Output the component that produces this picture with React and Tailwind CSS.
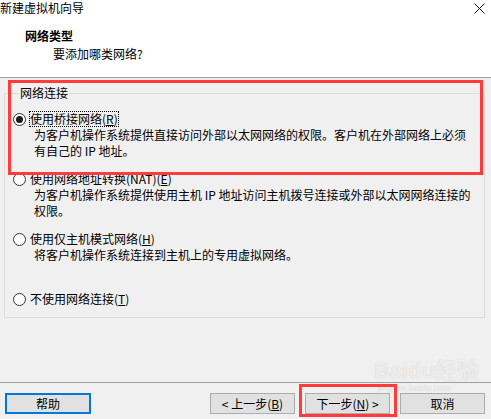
import React from "react";

const Radio = ({ checked }) => (
  <span className="w-[13px] h-[13px] rounded-full border border-[#333] bg-white flex items-center justify-center shrink-0">
    {checked && <span className="w-[7px] h-[7px] rounded-full bg-[#1a1a1a]" />}
  </span>
);

const Option = ({ checked, focused, label, keyChar, desc, className = "h-[60px]" }) => (
  <div className={className}>
    <div className="flex items-center h-[16px]">
      <Radio checked={checked} />
      <span
        className={`ml-[3px] h-[16px] leading-[14px] border ${
          focused ? "border-dotted border-black" : "border-transparent"
        }`}
      >
        {label}(<u>{keyChar}</u>)
      </span>
    </div>
    {desc && (
      <div className="pl-[21px] leading-[16px] whitespace-nowrap">
        {desc.map((line, i) => (
          <div key={i}>{line}</div>
        ))}
      </div>
    )}
  </div>
);

const Button = ({ children, primary }) => (
  <button
    className={`h-[21px] bg-[#e1e1e1] text-[12px] leading-[15px] text-black ${
      primary ? "w-[86px] border-2 border-[#0078d7]" : "w-[85px] border border-[#adadad]"
    }`}
  >
    {children}
  </button>
);

export default function App() {
  return (
    <div className="relative w-[491px] h-[419px] overflow-hidden bg-[#f0f0f0] text-black text-[12px] font-['Noto_Sans_CJK_SC','Microsoft_YaHei',sans-serif]">
      {/* Header */}
      <div className="relative h-[78px] bg-white border-b border-[#a0a0a0]">
        <div className="leading-[16px]">新建虚拟机向导</div>
        <svg className="absolute left-[474px] top-[3px]" width="11" height="11" viewBox="0 0 11 11">
          <path d="M0.5 0.5 L10.5 10.5 M10.5 0.5 L0.5 10.5" stroke="#111" strokeWidth="1" fill="none" />
        </svg>
        <div className="pl-[25px] mt-[12px] font-bold leading-[16px]">网络类型</div>
        <div className="pl-[53px] mt-[2px] leading-[16px]">要添加哪类网络?</div>
      </div>

      {/* Network group */}
      <fieldset className="mt-[7px] ml-[4px] w-[481px] border border-[#dcdcdc] pt-[10px] pb-[10px] pl-[8px]">
        <legend className="ml-[6px] px-[1px] leading-[16px]">网络连接</legend>
        <Option
          checked
          focused
          label="使用桥接网络"
          keyChar="R"
          desc={[
            "为客户机操作系统提供直接访问外部以太网网络的权限。客户机在外部网络上必须",
            "有自己的 IP 地址。",
          ]}
        />
        <Option
          label="使用网络地址转换(NAT)"
          keyChar="E"
          desc={[
            "为客户机操作系统提供使用主机 IP 地址访问主机拨号连接或外部以太网网络连接的",
            "权限。",
          ]}
        />
        <Option
          label="使用仅主机模式网络"
          keyChar="H"
          desc={["将客户机操作系统连接到主机上的专用虚拟网络。"]}
        />
        <Option label="不使用网络连接" keyChar="T" className="h-[16px]" />
      </fieldset>

      {/* Footer */}
      <div className="mt-[64px] border-t border-[#a0a0a0] pt-[10px] px-[5px] flex">
        <Button primary>帮助</Button>
        <div className="ml-auto mr-[1px] flex gap-[10px]">
          <Button>
            &lt; 上一步(<u>B</u>)
          </Button>
          <Button>
            下一步(<u>N</u>) &gt;
          </Button>
          <Button>取消</Button>
        </div>
      </div>

      {/* Watermark */}
      <div className="absolute left-[374px] top-[360px] text-white/70 font-bold text-[22px] leading-[22px] [text-shadow:0_0_1px_#c0c0c0] font-['Liberation_Sans','Noto_Sans_CJK_SC',sans-serif]">
        Baidu经验
      </div>
      <div className="absolute left-[378px] top-[383px] text-white/70 text-[9px] leading-[10px] [text-shadow:0_0_1px_#c0c0c0] font-['Liberation_Sans',sans-serif]">
        jingyan.baidu.com
      </div>

      {/* Annotation boxes */}
      <div className="absolute left-[8px] top-[80px] w-[475px] h-[95px] border-[3px] border-[#ff3b3b]" />
      <div className="absolute left-[299px] top-[384px] w-[98px] h-[33px] border-[3px] border-[#ff3b3b]" />
    </div>
  );
}
